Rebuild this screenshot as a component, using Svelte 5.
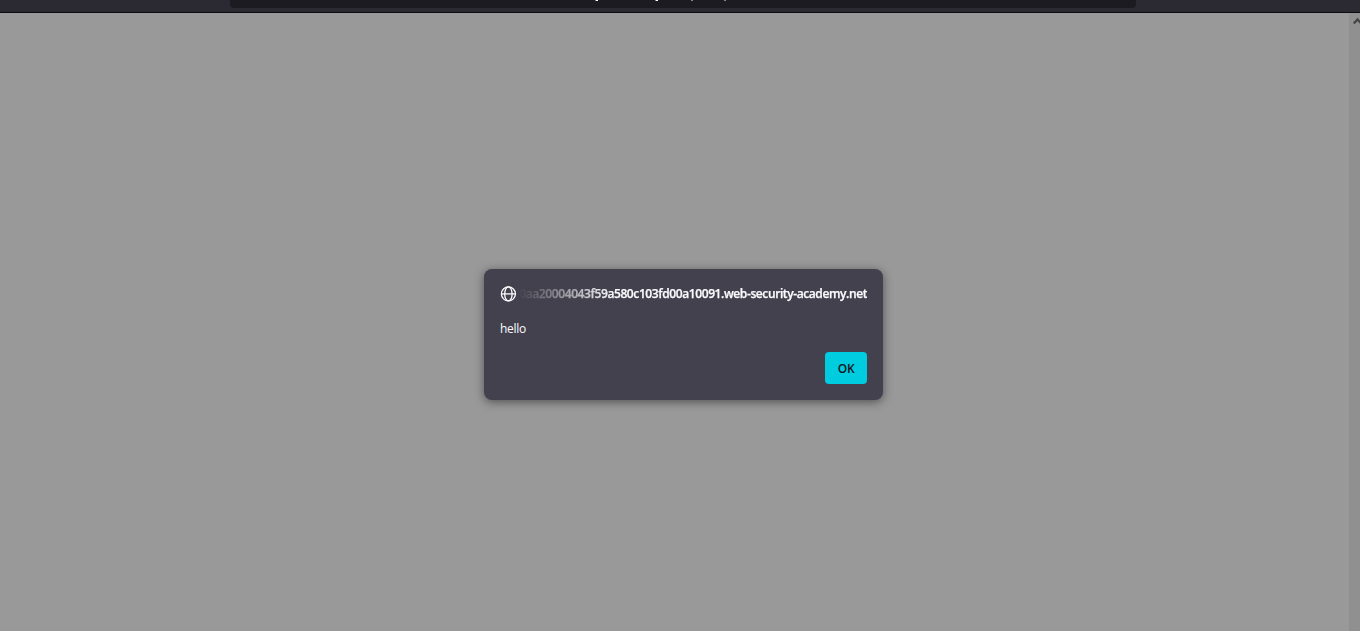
<script>
  const host = '0aa20004043f59a580c103fd00a10091.web-security-academy.net';
</script>

<div class="window">
  <header class="toolbar">
    <div class="address">
      <svg width="906" height="8" viewBox="0 0 906 8" aria-hidden="true">
        <path d="M366 0h2v1h-2zM426 0h2v1h-2z" fill="#fbfbfe" />
        <path d="M365 0h1v1h-1zM425 0h1v1h-1zM461 0h2v1h-2zM494 0h2v1h-2z" fill="#85858d" />
      </svg>
    </div>
  </header>
  <main class="content">
    <div class="page">
      <section class="dialog" role="alertdialog">
        <div class="title">
          <svg class="globe" viewBox="0 0 16 16" width="16" height="16" aria-hidden="true">
            <g fill="none" stroke="#fbfbfe" stroke-width="1.3">
              <circle cx="8.4" cy="7.9" r="7" />
              <ellipse cx="8.4" cy="7.9" rx="3.7" ry="7" />
              <path d="M1.4 7.9h14" />
            </g>
          </svg>
          <div class="host"><span>{host}</span></div>
        </div>
        <p class="message">hello</p>
        <div class="actions"><button>OK</button></div>
      </section>
    </div>
    <aside class="scrollbar">
      <svg width="11" height="12" viewBox="0 0 11 12" aria-hidden="true">
        <path d="M4.8 10.4L8.5 6.4L12.2 10.4" fill="none" stroke="#444447" stroke-width="2.2" />
      </svg>
    </aside>
  </main>
</div>

<style>
  .window {
    width: 1360px;
    height: 631px;
    display: flex;
    flex-direction: column;
    overflow: hidden;
    font-family: "Open Sans", "Noto Sans", sans-serif;
    font-size: 12px;
    color: #fbfbfe;
  }
  .toolbar {
    box-sizing: border-box;
    height: 13px;
    flex: none;
    background: #2b2a33;
    border-bottom: 1px solid #0c0c0d;
    padding: 0 224px 0 230px;
  }
  .address {
    height: 8px;
    background: #1c1b22;
    border-radius: 0 0 4px 4px;
    overflow: hidden;
  }
  svg { display: block; flex: none; }
  .content { flex: 1; display: flex; background: #99999a; }
  .page { flex: 1; padding: 256px 0 0 484px; }
  .scrollbar { width: 11px; background: #909091; }
  .dialog {
    box-sizing: border-box;
    width: 399px;
    height: 131px;
    padding: 16px;
    border-radius: 8px;
    background: #42414d;
    box-shadow: 0 2px 10px rgba(12, 12, 13, 0.5);
    display: flex;
    flex-direction: column;
  }
  .title { display: flex; align-items: center; height: 17px; gap: 2px; }
  .host {
    flex: 1;
    display: flex;
    justify-content: flex-end;
    font-weight: 650;
    line-height: 17px;
    letter-spacing: -0.4px;
    -webkit-text-stroke: 0.25px #fbfbfe;
    white-space: nowrap;
    mask-image: linear-gradient(to right, transparent, #000 96px);
  }
  .message { margin: 18px 0 0; line-height: 17px; letter-spacing: -0.3px; }
  .actions { display: flex; justify-content: flex-end; margin-top: 15px; }
  button {
    width: 42px;
    height: 32px;
    padding: 0;
    border: 0;
    border-radius: 4px;
    background: #00ccdf;
    color: #15141a;
    font: 600 12px "Open Sans", "Noto Sans", sans-serif;
    letter-spacing: -0.3px;
  }
</style>
